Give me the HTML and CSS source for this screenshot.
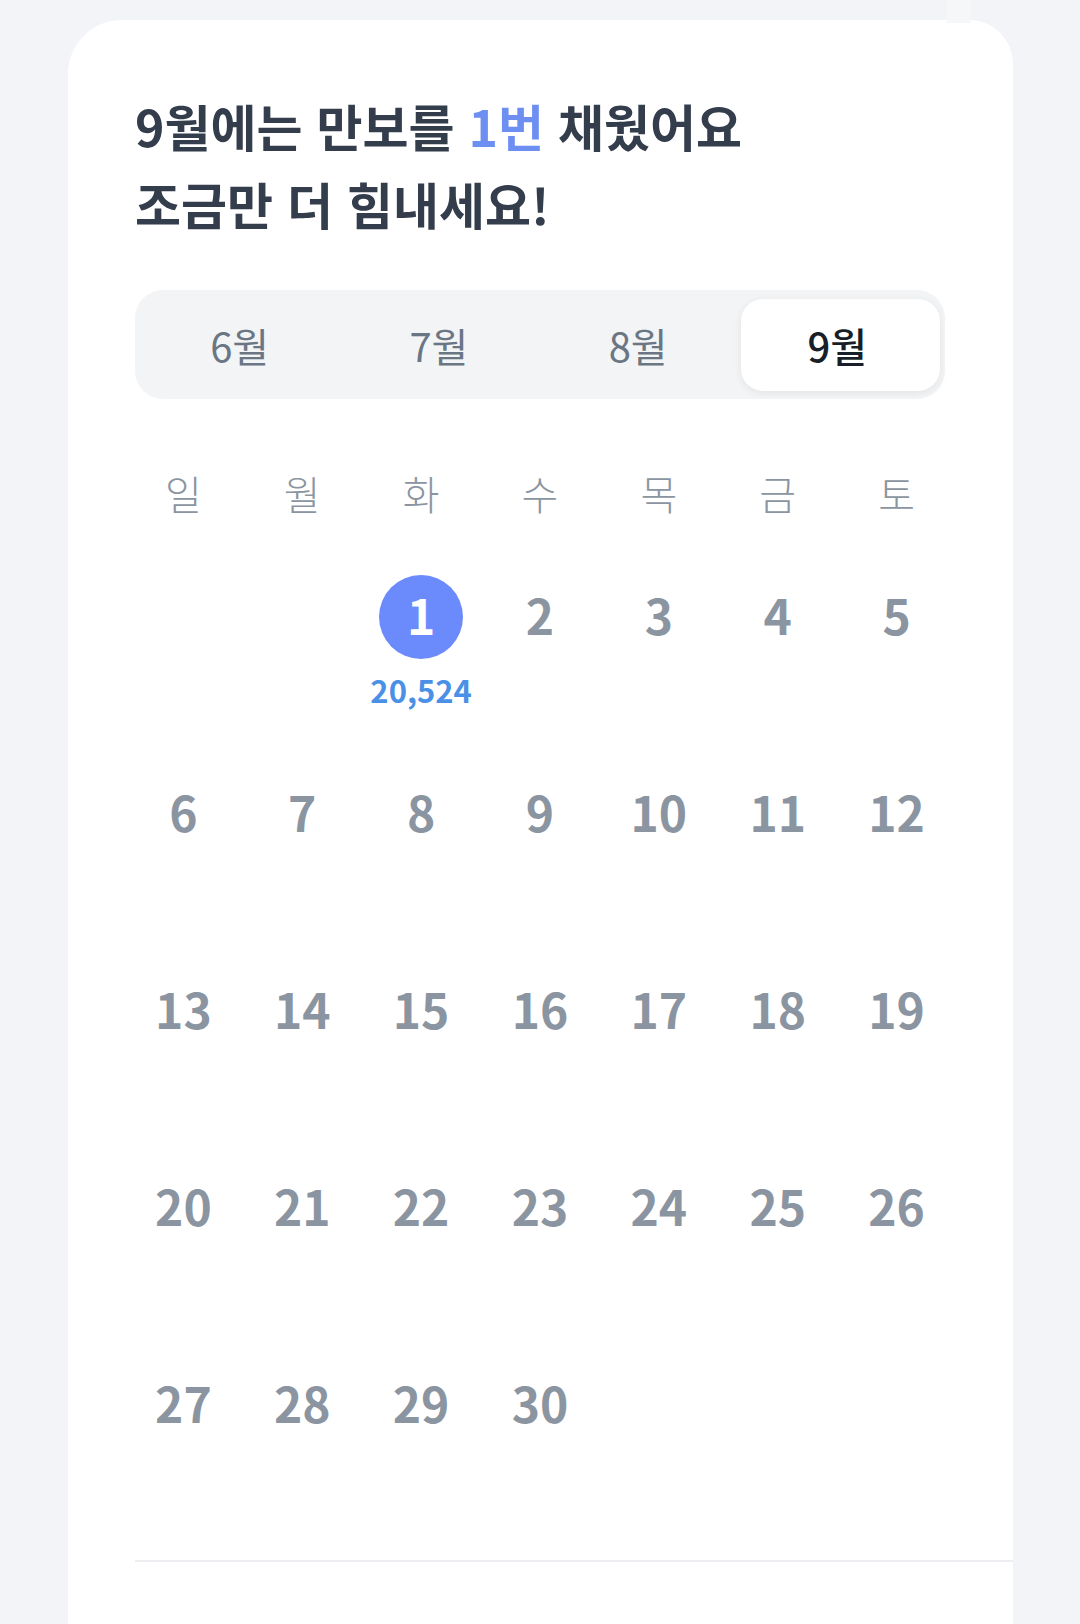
FILE: index.html
```html
<!DOCTYPE html>
<html lang="ko">
<head>
<meta charset="utf-8">
<title>만보 달력</title>
<link rel="stylesheet" href="styles.css">
</head>
<body>
<div class="page">
  <div class="notch"></div>
  <section class="card">
    <h1 class="title">9월에는 만보를 <span class="accent">1번</span> 채웠어요<br>조금만 더 힘내세요!</h1>

    <div class="segment">
      <div class="seg-item">6월</div>
      <div class="seg-item">7월</div>
      <div class="seg-item">8월</div>
      <div class="seg-item active">9월</div>
    </div>

    <div class="weekdays">
      <div class="wd">일</div><div class="wd">월</div><div class="wd">화</div><div class="wd">수</div><div class="wd">목</div><div class="wd">금</div><div class="wd">토</div>
    </div>

    <div class="days">
      <div class="day"></div>
      <div class="day"></div>
      <div class="day done"><div class="num">1</div><div class="steps">20,524</div></div>
      <div class="day"><div class="num">2</div></div>
      <div class="day"><div class="num">3</div></div>
      <div class="day"><div class="num">4</div></div>
      <div class="day"><div class="num">5</div></div>
      <div class="day"><div class="num">6</div></div>
      <div class="day"><div class="num">7</div></div>
      <div class="day"><div class="num">8</div></div>
      <div class="day"><div class="num">9</div></div>
      <div class="day"><div class="num">10</div></div>
      <div class="day"><div class="num">11</div></div>
      <div class="day"><div class="num">12</div></div>
      <div class="day"><div class="num">13</div></div>
      <div class="day"><div class="num">14</div></div>
      <div class="day"><div class="num">15</div></div>
      <div class="day"><div class="num">16</div></div>
      <div class="day"><div class="num">17</div></div>
      <div class="day"><div class="num">18</div></div>
      <div class="day"><div class="num">19</div></div>
      <div class="day"><div class="num">20</div></div>
      <div class="day"><div class="num">21</div></div>
      <div class="day"><div class="num">22</div></div>
      <div class="day"><div class="num">23</div></div>
      <div class="day"><div class="num">24</div></div>
      <div class="day"><div class="num">25</div></div>
      <div class="day"><div class="num">26</div></div>
      <div class="day"><div class="num">27</div></div>
      <div class="day"><div class="num">28</div></div>
      <div class="day"><div class="num">29</div></div>
      <div class="day"><div class="num">30</div></div>
    </div>

    <div class="divider"></div>
  </section>
</div>
</body>
</html>
```

FILE: styles.css
```css
* { box-sizing: border-box; }

html, body {
  margin: 0;
  padding: 0;
  background: #f2f4f7;
}

body {
  font-family: "Noto Sans CJK KR", "Noto Sans", sans-serif;
  width: 1080px;
  height: 1624px;
  overflow: hidden;
}

.page {
  position: relative;
  padding-top: 20px;
}

.notch {
  position: absolute;
  top: 0;
  left: 947px;
  width: 24px;
  height: 23px;
  background: #f6f7f9;
}

.card {
  margin-left: 68px;
  width: 945px;
  min-height: 1604px;
  background: #ffffff;
  border-radius: 54px 44px 0 0;
  padding: 66px 0 0 67px;
}

.title {
  margin: 0;
  font-size: 50px;
  line-height: 78px;
  font-weight: 700;
  color: #333d4b;
  letter-spacing: 0;
}

.accent { color: #6d8ff2; }

.segment {
  margin-top: 48px;
  width: 810px;
  height: 109px;
  background: #f2f4f6;
  border-radius: 28px;
  padding: 9px 5px 8px 8px;
  display: grid;
  grid-template-columns: repeat(4, 1fr);
}

.seg-item {
  display: flex;
  align-items: center;
  justify-content: center;
  font-size: 40px;
  color: #6b7684;
  border-radius: 22px;
  padding-right: 6px;
}

.seg-item.active {
  background: #ffffff;
  color: #191f28;
  font-weight: 500;
  box-shadow: 0 2px 8px rgba(0, 0, 0, 0.07);
}

.weekdays {
  margin: 68px 0 0 -11px;
  width: 832px;
  display: grid;
  grid-template-columns: repeat(7, 1fr);
}

.wd {
  text-align: center;
  font-size: 40px;
  line-height: 52px;
  font-weight: 300;
  color: #8b95a1;
}

.days {
  margin: 56px 0 0 -11px;
  width: 832px;
  display: grid;
  grid-template-columns: repeat(7, 1fr);
  grid-auto-rows: 197px;
}

.day {
  display: flex;
  flex-direction: column;
  align-items: center;
}

.num {
  width: 84px;
  height: 84px;
  border-radius: 50%;
  display: flex;
  align-items: center;
  justify-content: center;
  padding-bottom: 6px;
  font-size: 48px;
  font-weight: 600;
  color: #8b95a1;
}

.done .num {
  background: #6b8bfc;
  color: #ffffff;
}

.steps {
  margin-top: 13px;
  font-size: 31px;
  line-height: 36px;
  font-weight: 700;
  color: #4a90e6;
}

.divider {
  height: 2px;
  background: #eceef1;
}
```
